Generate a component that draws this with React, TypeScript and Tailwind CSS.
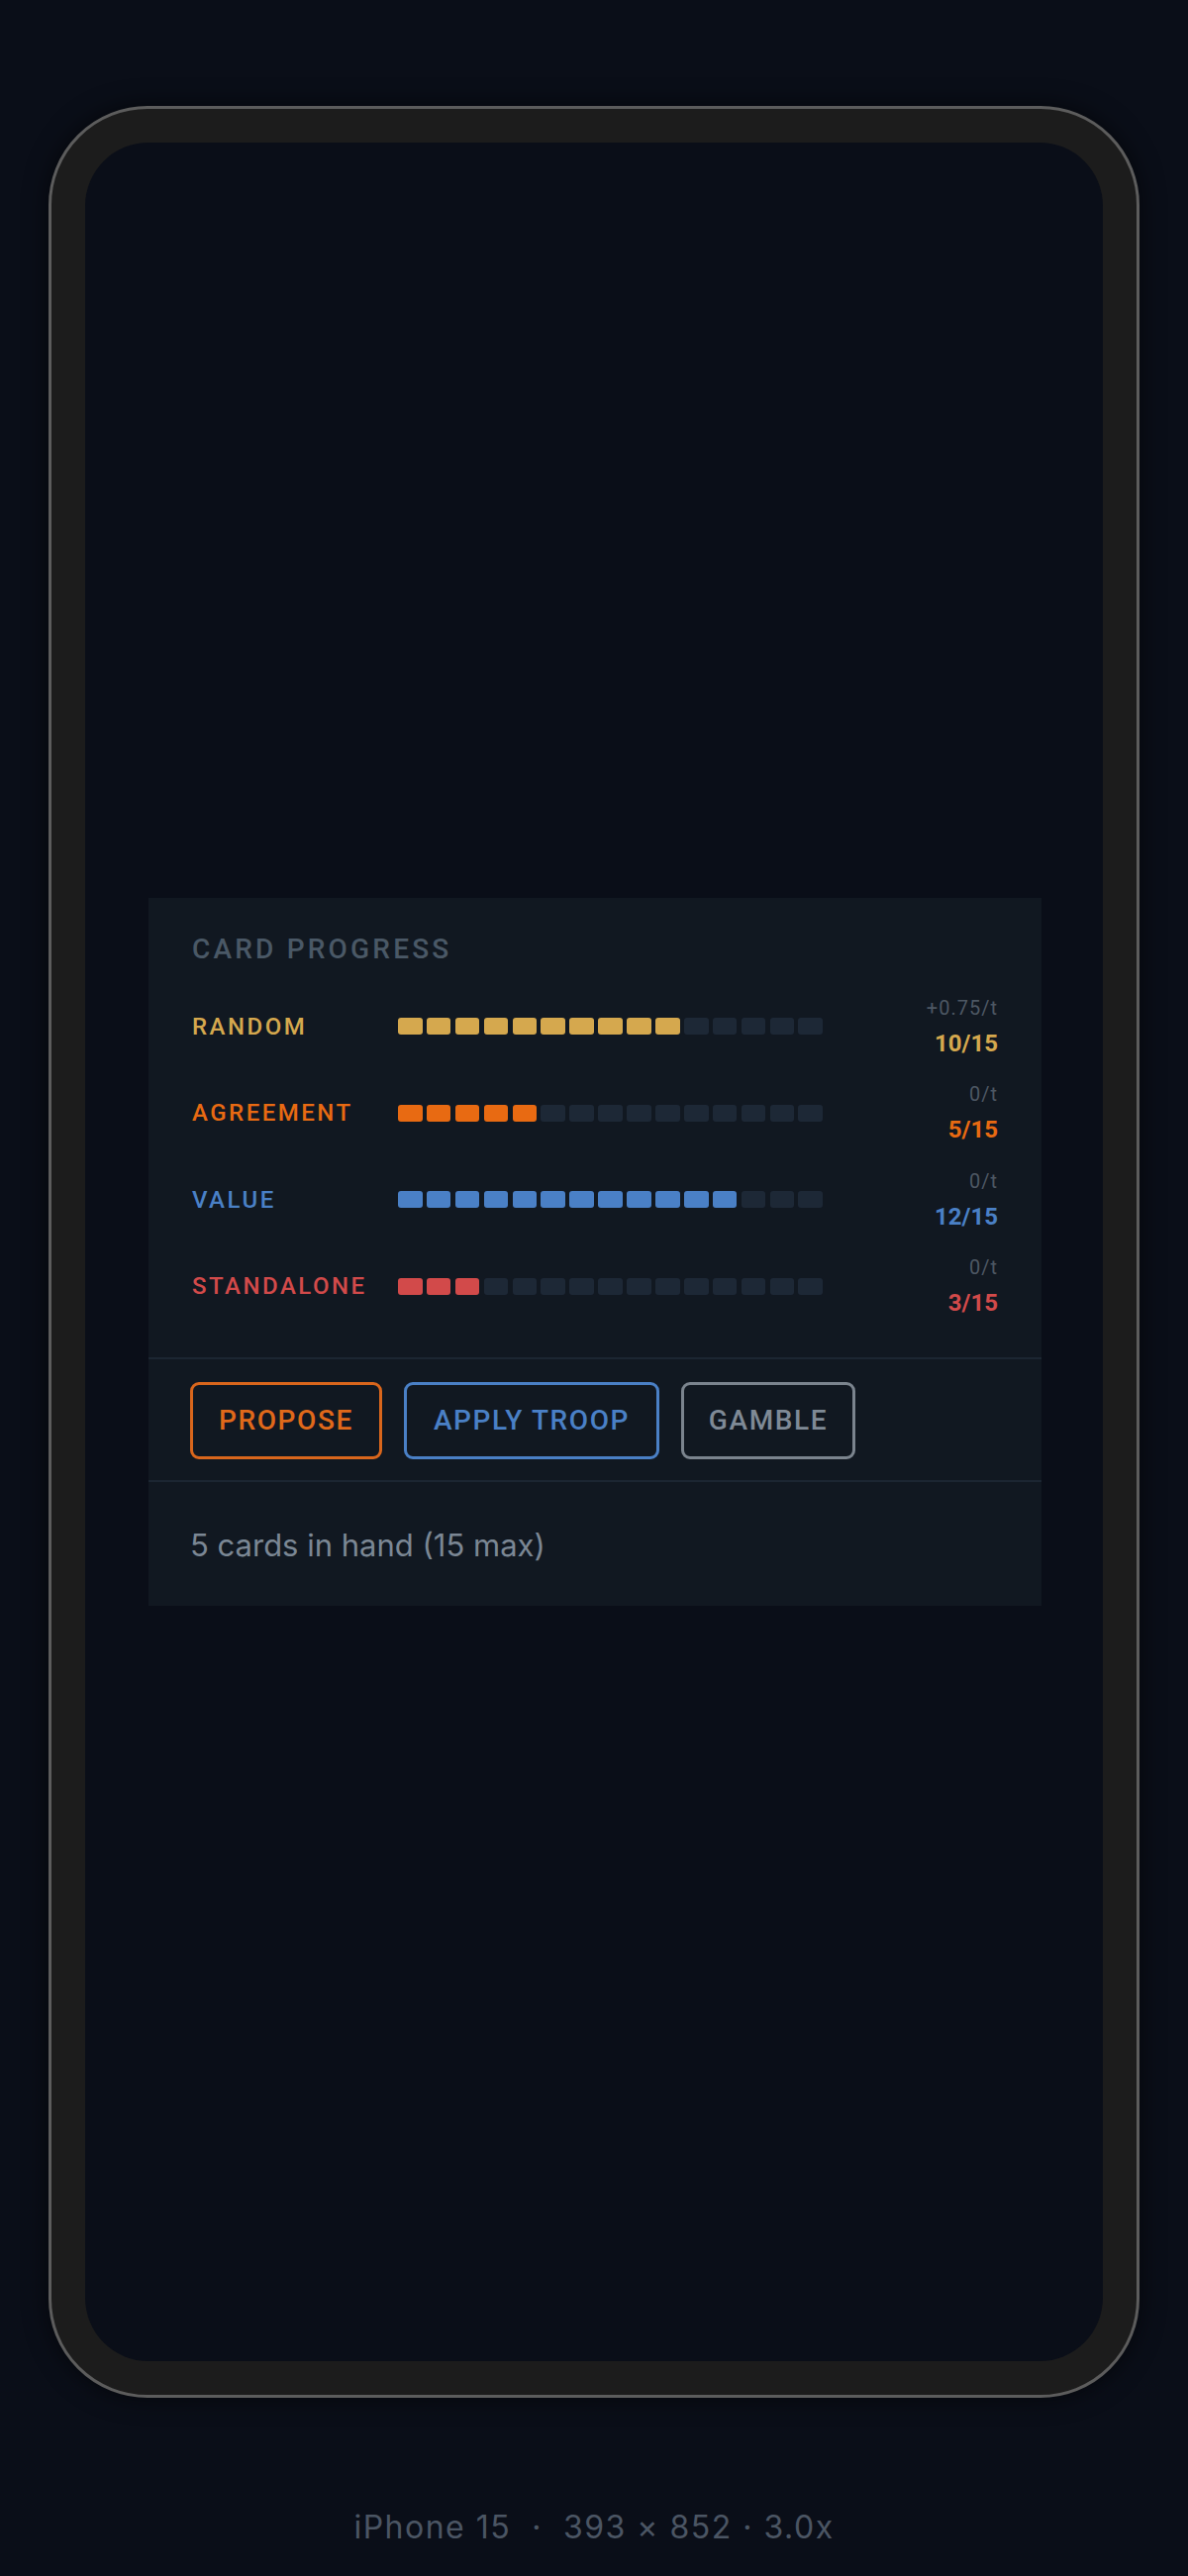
import React from "react";

type Track = {
  label: string;
  rate: string;
  count: number;
  text: string;
  fill: string;
};

const MAX = 15;

const tracks: Track[] = [
  { label: "RANDOM", rate: "+0.75/t", count: 10, text: "text-[#d5a84e]", fill: "bg-[#d5a84e]" },
  { label: "AGREEMENT", rate: "0/t", count: 5, text: "text-[#e86a12]", fill: "bg-[#e86a12]" },
  { label: "VALUE", rate: "0/t", count: 12, text: "text-[#4a80c6]", fill: "bg-[#4a80c6]" },
  { label: "STANDALONE", rate: "0/t", count: 3, text: "text-[#d24a4a]", fill: "bg-[#d24a4a]" },
];

const actions = [
  { label: "PROPOSE", cls: "w-[194px] border-[#d9661c] text-[#e0691a]" },
  { label: "APPLY TROOP", cls: "w-[258px] border-[#4a80c6] text-[#4a80c6]" },
  { label: "GAMBLE", cls: "w-[176px] border-[#7b848e] text-[#7f8a96]" },
];

const TrackRow: React.FC<{ t: Track }> = ({ t }) => (
  <div className="flex h-[62px] items-center">
    <div
      className={`w-[208px] shrink-0 text-[24px] leading-[28px] font-medium tracking-[2.5px] ${t.text}`}
    >
      {t.label}
    </div>
    <div className="flex flex-1 gap-[4.3px]">
      {Array.from({ length: MAX }).map((_, i) => (
        <div
          key={i}
          className={`h-[17px] flex-1 rounded-[3px] ${i < t.count ? t.fill : "bg-[#1d2836]"}`}
        />
      ))}
    </div>
    <div className="ml-[21px] w-[156px] shrink-0 text-right">
      <div className="text-[20px] leading-[24px] tracking-[1px] text-[#4d5763]">{t.rate}</div>
      <div className={`mt-[10px] text-[24px] leading-[28px] font-bold ${t.text}`}>
        {t.count}/{MAX}
      </div>
    </div>
  </div>
);

const CardProgress: React.FC = () => (
  <div className="w-full bg-[#111821] font-['Roboto',sans-serif]">
    {/* progress tracks */}
    <div className="px-[44px] pt-[35px] pb-[41px]">
      <h2 className="text-[28px] leading-[34px] font-medium tracking-[3.2px] text-[#4a5866]">
        CARD PROGRESS
      </h2>
      <div className="mt-[30px] flex flex-col gap-[25.5px]">
        {tracks.map((t) => (
          <TrackRow key={t.label} t={t} />
        ))}
      </div>
    </div>

    {/* actions */}
    <div className="flex gap-[22px] border-t-2 border-[#1c2632] px-[42px] pt-[23px] pb-[21px]">
      {actions.map((a) => (
        <button
          key={a.label}
          className={`flex h-[78px] items-center justify-center rounded-[9px] border-[3px] text-[28px] font-medium tracking-[1.6px] ${a.cls}`}
        >
          {a.label}
        </button>
      ))}
    </div>

    {/* hand */}
    <div className="h-[127px] border-t-2 border-[#1c2632] px-[42px] pt-[45px]">
      <p className="font-['Inter',sans-serif] text-[31px] leading-[37px] text-[#7b8794]">
        5 cards in hand (15 max)
      </p>
    </div>
  </div>
);

export default function App() {
  return (
    <div className="flex min-h-screen flex-col items-center bg-[#0a0e18] pt-[107px]">
      <div className="h-[2315px] w-[1102px] rounded-[100px] border-[3px] border-[#5c5c5c] bg-[#1c1c1c] p-[34px] shadow-[0_0_24px_rgba(0,0,0,0.6)]">
        <div className="flex h-full w-full items-center overflow-hidden rounded-[64px] bg-[#0a0e18] pl-[64px] pr-[62px]">
          <CardProgress />
        </div>
      </div>
      <p className="mt-[112px] whitespace-pre font-['Inter',sans-serif] text-[32px] leading-[38px] tracking-[1.5px] text-[#4b5563]">
        {"iPhone 15  ·  393 × 852 · 3.0x"}
      </p>
    </div>
  );
}
